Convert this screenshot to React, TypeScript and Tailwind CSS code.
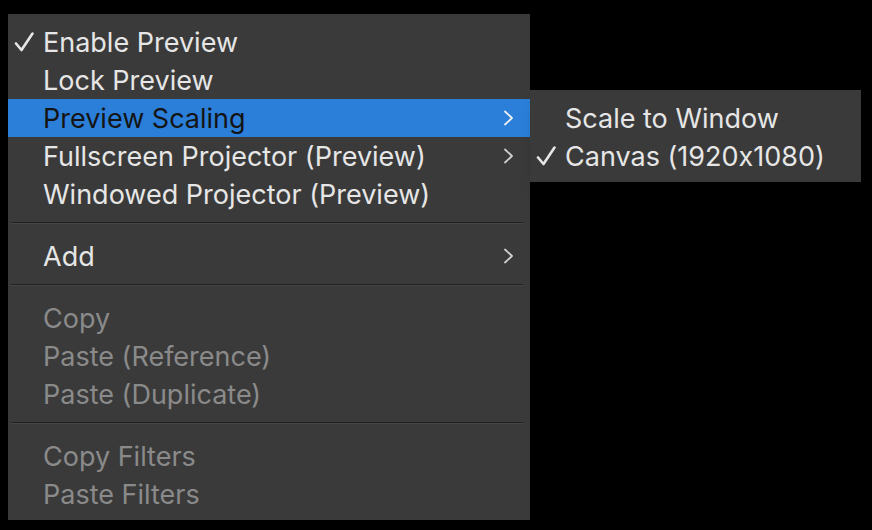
type Item = {
  label: string;
  checked?: boolean;
  sub?: boolean;
  active?: boolean;
  disabled?: boolean;
};

const groups: Item[][] = [
  [
    { label: "Enable Preview", checked: true },
    { label: "Lock Preview" },
    { label: "Preview Scaling", sub: true, active: true },
    { label: "Fullscreen Projector (Preview)", sub: true },
    { label: "Windowed Projector (Preview)" },
  ],
  [{ label: "Add", sub: true }],
  [
    { label: "Copy", disabled: true },
    { label: "Paste (Reference)", disabled: true },
    { label: "Paste (Duplicate)", disabled: true },
  ],
  [
    { label: "Copy Filters", disabled: true },
    { label: "Paste Filters", disabled: true },
  ],
];

function Check() {
  return (
    <svg width="20" height="20" viewBox="0 0 20 20" className="ml-[6px]">
      <path d="M2 11.5 L7.5 18 L18.5 1.5" fill="none" stroke="currentColor" strokeWidth="2.6" strokeLinecap="round" strokeLinejoin="round" />
    </svg>
  );
}

function Chevron() {
  return (
    <svg width="12" height="16" viewBox="0 0 12 16" className="mr-[15px]">
      <path d="M2 1.5 L9 8 L2 14.5" fill="none" stroke="currentColor" strokeWidth="1.8" strokeLinecap="round" strokeLinejoin="round" />
    </svg>
  );
}

function Row({ item }: { item: Item }) {
  const color = item.active
    ? "bg-[#2b7fd9] text-[#141414]"
    : item.disabled
      ? "text-[#8a8a8a]"
      : "text-[#e6e6e6]";
  return (
    <div className={`flex items-center h-[38px] ${color}`}>
      <span className="w-[35px] flex items-center">{item.checked && <Check />}</span>
      <span className="flex-1 text-[27px] leading-none whitespace-nowrap">{item.label}</span>
      {item.sub && (
        <span className={item.active ? "text-[#f0f0f0]" : "text-[#d0d0d0]"}>
          <Chevron />
        </span>
      )}
    </div>
  );
}

function Separator() {
  return (
    <div className="pt-[9px] pb-[13px] pl-[3px] pr-[7px]">
      <div className="h-[1px] bg-[#202020]" />
      <div className="h-[1px] bg-[#464646]" />
    </div>
  );
}

export default function App() {
  return (
    <div
      className="w-[872px] h-[530px] bg-black flex items-start pl-[8px] pt-[14px] [font-feature-settings:'calt'_0]"
      style={{ fontFamily: '"Inter", "Noto Sans", sans-serif' }}
    >
      <div className="w-[522px] bg-[#3a3a3a] pt-[9px] pb-[7px]">
        {groups.map((g, i) => (
          <div key={i}>
            {i > 0 && <Separator />}
            {g.map((item) => (
              <Row key={item.label} item={item} />
            ))}
          </div>
        ))}
      </div>
      <div className="w-[331px] bg-[#3a3a3a] mt-[76px] pt-[9px] pb-[7px] shadow-lg">
        <div className="flex items-center h-[38px] text-[#e6e6e6]">
          <span className="w-[35px]" />
          <span className="text-[27px] leading-none whitespace-nowrap">Scale to Window</span>
        </div>
        <div className="flex items-center h-[38px] text-[#e6e6e6]">
          <span className="w-[35px] flex items-center">
            <Check />
          </span>
          <span className="text-[27px] leading-none whitespace-nowrap">Canvas (1920x1080)</span>
        </div>
      </div>
    </div>
  );
}
